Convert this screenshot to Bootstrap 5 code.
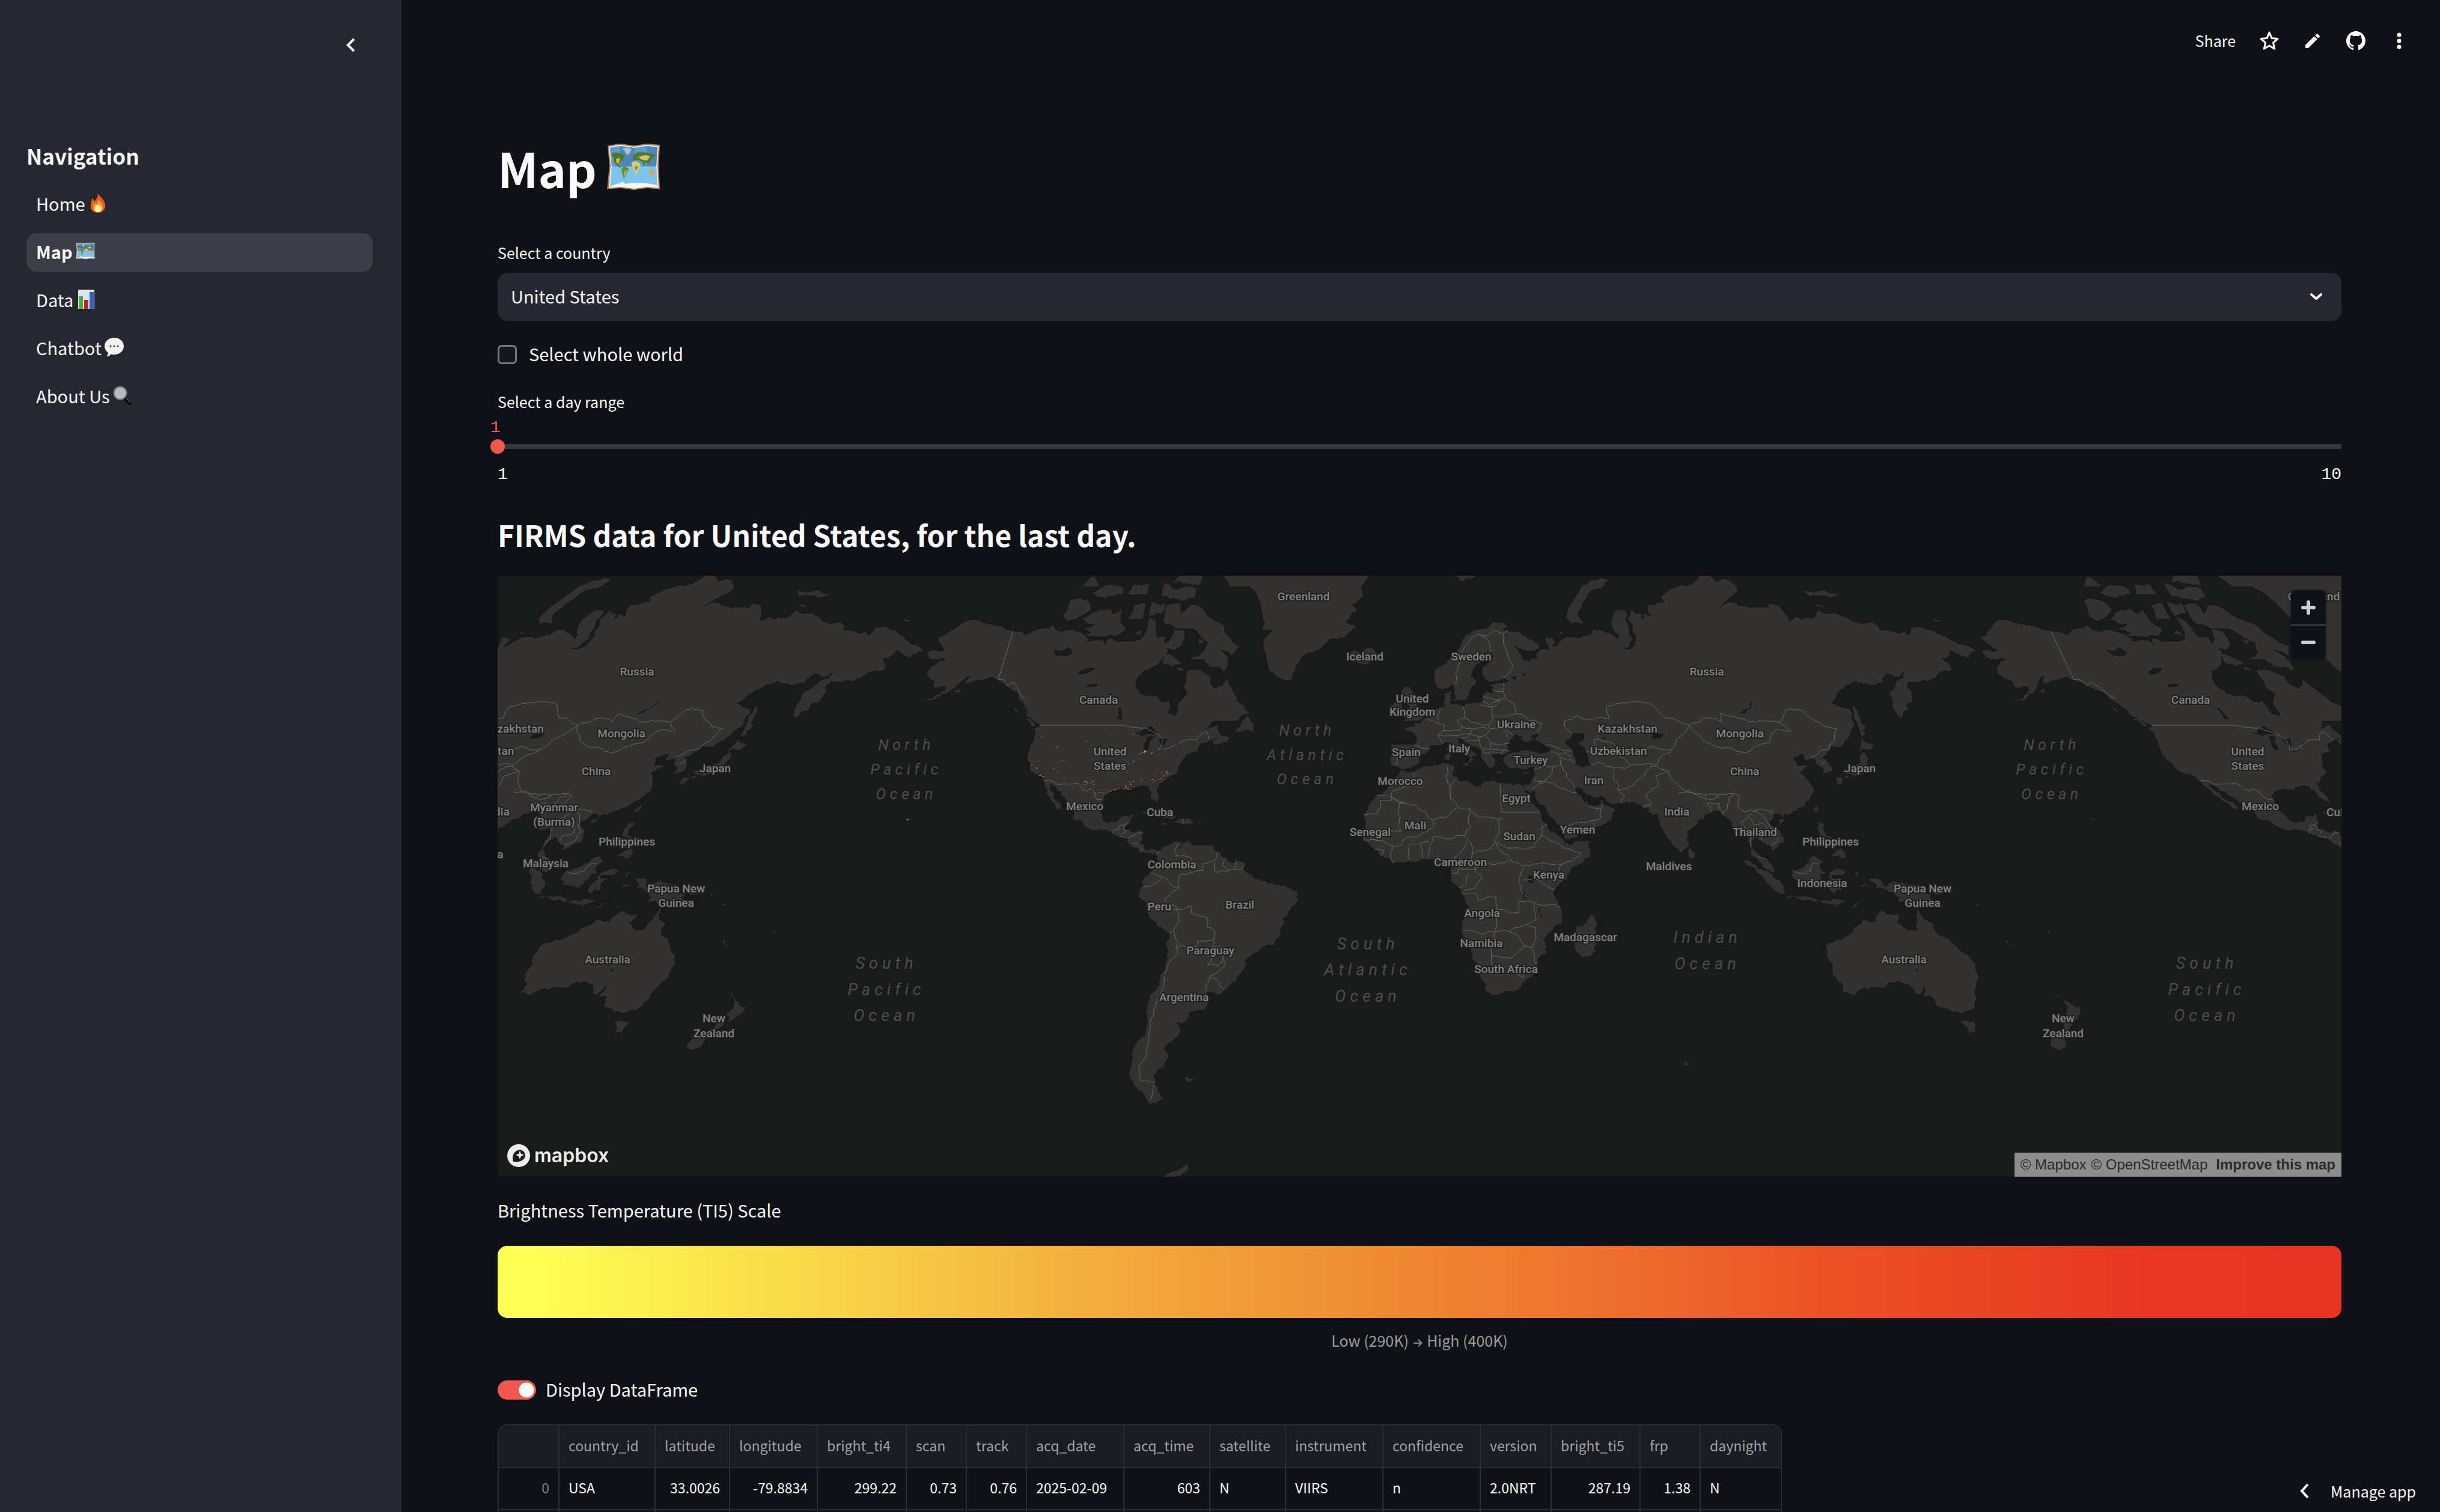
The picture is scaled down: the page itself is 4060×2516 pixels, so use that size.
<!DOCTYPE html>
<html lang="en">
<head>
<meta charset="utf-8">
<meta name="viewport" content="width=device-width, initial-scale=1">
<title>Map</title>
<link href="https://cdn.jsdelivr.net/npm/bootstrap@5.3.0/dist/css/bootstrap.min.css" rel="stylesheet">
<style>
:root{--app-bg:#0f1116;--panel:#262730;--ink:#fafafa;--accent:#f0584f;--muted:#9c9d9f}
body{background:var(--app-bg);color:var(--ink);font-family:"Noto Sans CJK SC","Noto Sans CJK JP",sans-serif;font-size:29px;line-height:48px}
button,input,select{font-family:inherit}
.side{width:668px;background:var(--panel);padding:0 48px 0 44px}
.side-top{height:136px;padding-top:14px}
.icon-btn{background:none;border:0;padding:0;color:inherit;line-height:0;display:block}
.side-title{font-size:35px;line-height:48px;font-weight:700;margin:99px 0 25px}
.side .nav{gap:16px}
.side .nav-link{color:var(--ink);height:64px;padding:0 16px 4px;border-radius:16px;font-size:29px;display:flex;align-items:center;gap:5px}
.side .nav-link.active{background:#3c3d46;font-weight:700}
.pic{width:32px;height:32px;flex:none}
.content{padding:0 164px 0 160px}
.topbar{height:136px;padding-right:32px}
.topbar .tool{width:72px;display:flex;justify-content:center}
.share{background:none;border:0;color:inherit;font-size:25px;line-height:40px;padding:0 0 2px;margin-right:20px}
.page-title{font-size:79px;line-height:106px;font-weight:700;margin:90px 0 68px;gap:17px}
.page-title svg{width:88px;height:80px}
.field-label{font-size:25px;line-height:40px;margin:0;display:block}
.country{height:80px;margin:14px 0 32px;background-color:var(--panel);border:0;border-radius:16px;color:var(--ink);font-size:29px;line-height:48px;padding:0 72px 4px 22px;
background-image:url("data:image/svg+xml,%3Csvg xmlns='http://www.w3.org/2000/svg' viewBox='0 0 24 16'%3E%3Cpath d='M4 4l8 7 8-7' fill='none' stroke='%23fafafa' stroke-width='4' stroke-linecap='round' stroke-linejoin='round'/%3E%3C/svg%3E");background-size:24px 16px;background-position:right 30px center}
.tick{gap:20px;margin-bottom:34px}
.tick label,.toggle label{height:48px;line-height:44px}
.tick input{width:32px;height:32px;margin:0;border:3px solid #77787e;border-radius:8px;background-color:#131720;flex:none}
.mono{font-family:"Liberation Mono",monospace;font-size:28px;line-height:32px}
.slide-value{color:var(--accent);line-height:28px;margin:10px 0 5px -12px}
.slider{appearance:none;display:block;width:calc(100% + 24px);height:24px;margin:0 -12px 19px;background:linear-gradient(#363940,#363940) no-repeat center/calc(100% - 24px) 8px}
.slider::-webkit-slider-runnable-track{height:24px;background:none}
.slider::-webkit-slider-thumb{appearance:none;width:24px;height:24px;border-radius:50%;background:var(--accent)}
.section-title{font-size:48px;line-height:68px;font-weight:700;margin:49px 0 35px}
.world{height:1000px;background:#191b1a;overflow:hidden}
.world>svg{width:100%;height:100%;display:block}
.land{fill:#343231}.water{fill:#191b1a}.edge{fill:none;stroke:#686867;stroke-width:1}
.place{font:500 19px Roboto,sans-serif;fill:#828281;stroke:#1f1f1e;stroke-width:4px;stroke-linejoin:round;paint-order:stroke;text-anchor:middle}
.sea-n,.sea-s{font:italic 400 25px Roboto,sans-serif;letter-spacing:.26em;fill:#4c4e4d;text-anchor:middle}
.sea-s{font-size:27px}
.zoomer{top:24px;right:26px;width:58px;border-radius:8px;overflow:hidden;box-shadow:0 0 0 4px rgba(0,0,0,.1)}
.zoomer button{height:57px;width:58px;background:#0e1117;border:0;padding:0;line-height:0}
.zoomer button+button{border-top:2px solid #3d4044}
.brand{left:15px;bottom:15px;gap:6px;color:#ececec;font:600 32px/40px Inter,sans-serif;text-decoration:none}
.credit{right:0;bottom:0;height:40px;padding:0 10px;background:#8c8d8c;font:24px/40px "Liberation Sans",sans-serif;gap:14px}
.credit a{color:#2a2b2b;text-decoration:none}
.scale-label{margin:31px 0 36px}
.scale-bar{height:120px;border-radius:16px;background:linear-gradient(90deg,#ffff54 0,#ffff54 2%,#f2a93c 34%,#ee742d 58%,#eb5026 73%,#ea3623 90%,#ea3323 100%)}
.scale-note{font-size:25px;line-height:40px;height:40px;color:var(--muted);margin:17px 0 39px}
.scale-note span{font-family:Inter,sans-serif;font-size:20px;line-height:20px}
.toggle{gap:16px;padding:0;margin:0 0 33px}
.toggle .form-check-input{width:64px;height:32px;margin:0;border:0;float:none;flex:none;background-color:var(--accent);background-image:radial-gradient(circle,#fafafa 12px,transparent 13px);background-size:32px 32px;background-position:right center}
.frame-box{border:2px solid #2b2d33;border-radius:16px 16px 0 0;overflow:hidden;width:2137px}
.frame-box table{table-layout:fixed;width:2137px;margin:0;border-collapse:separate;border-spacing:0;font-size:23px;line-height:32px}
.frame-box th,.frame-box td{height:70px;padding:0 15px 4px;vertical-align:middle;border-right:2px solid #2b2d33;border-bottom:2px solid #2b2d33;white-space:nowrap;font-weight:400;color:var(--ink)}
.frame-box thead th{background:#1a1c24;color:#a0a1a4;height:71px}
.frame-box tbody th{color:#808287}
.manage{right:0;bottom:0;height:66px;padding:0 40px 4px 28px;background:var(--app-bg);border:0;color:var(--ink);font-size:25px;line-height:40px;gap:33px}
</style>
</head>
<body>
<div class="d-flex vh-100 overflow-hidden position-relative">
  <aside class="side flex-shrink-0">
    <div class="side-top d-flex align-items-center justify-content-end">
      <button class="icon-btn" type="button" aria-label="Collapse sidebar"><svg width="72" height="40" viewBox="0 0 72 40"><path d="M41 10 31 20 41 30" fill="none" stroke="#fafafa" stroke-width="4"/></svg></button>
    </div>
    <h2 class="side-title">Navigation</h2>
    <nav class="nav flex-column">
      <a class="nav-link" href="#">Home <svg class="pic" viewBox="0 0 32 32"><path d="M16 0c2 5 10 8 12 18 1 8-4 14-12 14S3 27 4 19c0-5 2-7 2-11 2 1 3 2 4 5 4-4 6-8 6-13z" fill="#ee5a24"/><path d="M17 9c1 5 7 7 7 14 0 5-3 8-8 8s-8-3-8-8c0-4 2-6 3-8 1 1 1 2 2 3 2-2 4-5 4-9z" fill="#ff9f1c"/><ellipse cx="16" cy="25" rx="6" ry="6" fill="#fff3a0"/></svg></a>
      <a class="nav-link active" href="#" aria-current="page">Map <svg class="pic" viewBox="0 0 88 80"><use href="#paper-map"/></svg></a>
      <a class="nav-link" href="#">Data <svg class="pic" viewBox="0 0 32 32"><path d="M3 0h27v32H3z" fill="#dfe4ee"/><path d="M4 11h7v21H4z" fill="#4fae3a"/><path d="M13 17h7v15h-7z" fill="#b5271e"/><path d="M22 4h7v28h-7z" fill="#2c62c4"/></svg></a>
      <a class="nav-link" href="#">Chatbot <svg class="pic" viewBox="0 0 32 32"><path d="M16 0c9 0 16 6 16 14s-7 14-16 14c-2 0-4 0-5-1-2 3-5 4-8 4 2-2 3-4 3-6C2 22 0 18 0 14 0 6 7 0 16 0z" fill="#f1f1f1"/><g fill="#444"><circle cx="10" cy="14" r="1.6"/><circle cx="16" cy="14" r="1.6"/><circle cx="22" cy="14" r="1.6"/></g></svg></a>
      <a class="nav-link" href="#">About Us <svg class="pic" viewBox="0 0 32 32"><path d="M19 20l9 9" stroke="#08090b" stroke-width="6" stroke-linecap="round"/><path d="M22 21l6 6" stroke="#55575c" stroke-width="1.500" stroke-linecap="round"/><circle cx="12" cy="12" r="10.500" fill="#b9babc" stroke="#77797d" stroke-width="2"/></svg></a>
    </nav>
  </aside>

  <div class="flex-grow-1 overflow-hidden">
    <header class="topbar d-flex align-items-center justify-content-end" id="topbar">
      <button class="share" type="button">Share</button>
      <div class="tool"><button class="icon-btn" type="button" aria-label="Favourite"><svg width="36" height="36" viewBox="0 0 36 36"><path d="M18 4l4 9.600 10 .9-7.600 6.700 2.300 10L18 26l-8.700 5.200 2.300-10L4 14.500l10-.9z" fill="none" stroke="#fafafa" stroke-width="3" stroke-linejoin="round"/></svg></button></div>
      <div class="tool"><button class="icon-btn" type="button" aria-label="Edit source"><svg width="32" height="32" viewBox="0 0 24 24"><path d="M3 17.250V21h3.750L17.800 9.940l-3.750-3.750zM20.700 7.040a1 1 0 0 0 0-1.410l-2.340-2.340a1 1 0 0 0-1.410 0l-1.830 1.830 3.750 3.750z" fill="#fafafa"/></svg></button></div>
      <div class="tool"><button class="icon-btn" type="button" aria-label="View on GitHub"><svg width="32" height="32" viewBox="0 0 16 16"><path fill="#fafafa" d="M8 0C3.580 0 0 3.580 0 8c0 3.540 2.290 6.530 5.470 7.590.4.070.55-.17.55-.38 0-.19-.01-.82-.01-1.490-2.010.37-2.530-.49-2.690-.94-.09-.23-.48-.94-.82-1.130-.28-.15-.68-.52-.01-.53.63-.01 1.080.58 1.230.82.72 1.210 1.870.87 2.330.66.07-.52.28-.87.51-1.070-1.780-.2-3.640-.89-3.640-3.950 0-.87.31-1.590.82-2.150-.08-.2-.36-1.020.08-2.120 0 0 .67-.21 2.200.82.64-.18 1.320-.27 2-.27s1.360.09 2 .27c1.530-1.040 2.200-.82 2.200-.82.44 1.100.16 1.920.08 2.120.51.56.82 1.270.82 2.150 0 3.070-1.870 3.750-3.650 3.950.29.25.54.73.54 1.480 0 1.070-.01 1.930-.01 2.200 0 .21.15.46.55.38A8.010 8.010 0 0 0 16 8c0-4.420-3.580-8-8-8z"/></svg></button></div>
      <div class="tool"><button class="icon-btn" type="button" aria-label="Menu"><svg width="32" height="32" viewBox="0 0 32 32" fill="#fafafa"><circle cx="16" cy="6" r="3.500"/><circle cx="16" cy="16" r="3.500"/><circle cx="16" cy="26" r="3.500"/></svg></button></div>
    </header>

    <main class="content">
      <h1 class="page-title d-flex align-items-center">Map
        <svg viewBox="0 0 88 80" aria-hidden="true"><g id="paper-map"><path d="M1 3l21-3 23 3 22-3 21 2-2 34 2 40-21-2-22 3-23-3-22 2 4-40z" fill="#a9784c"/><path d="M3 5l19-3 23 3 22-3 19 2-2 32 2 38-19-2-22 3-23-3-19 2 3-38z" fill="#f3efe6"/><path d="M5 7l17-3 23 3 22-3 17 2-2 31 2 35-17-2-22 3-23-3-17 2 3-35z" fill="#7cc3ee"/><path d="M5 7l17-3v34H8zM45 7l22-3v34H45z" fill="#5a9bd0"/><path d="M22 4l23 3v31H22zM67 4l17 2-2 32H67z" fill="#4b87bd"/><path d="M7 70l14-4 5-3 4 4 15-2 22 1 16 3v4l-16-2-22 3-23-3-15 2z" fill="#f4f6f8"/><path d="M25 9l9-3 7 3-3 7-5 3-4-7z" fill="#aebccb"/><path d="M7 18l3-3 8 0 8 3 4 3-3 4-5 6-3 4 5 4-3 1-6-5-3-5-1-6z" fill="#4f7a2a"/><path d="M15 25l7-1-2 8-4 1z" fill="#e4b33c"/><path d="M26 38l6 0 4 4-2 5-3 6-3 6-2-7-2-8z" fill="#5f962f"/><path d="M30 45l3 0-4 10-1-5z" fill="#e0ad35"/><path d="M43 21l4-5 8-2 12 1 14 4-4 4-3 2-2 6-4 3-3-3-4 0-5-2-4-2-8 1z" fill="#4f7a2a"/><path d="M52 22l12-3 8 2-5 7-9-1z" fill="#d9bf62"/><path d="M41 31l6-2 7 3 2 5-3 5-2 8-3 2-2-8-5-6z" fill="#e3c56a"/><path d="M46 38l6 0-3 6-2-1z" fill="#5f962f"/><path d="M59 31l5 1-2 6z" fill="#4f7a2a"/><path d="M69 46l6-3 4 5-2 4-7-1z" fill="#ec9f3a"/></g></svg>
      </h1>

      <label class="field-label" for="country">Select a country</label>
      <select class="form-select country" id="country"><option>United States</option></select>

      <div class="tick d-flex align-items-center">
        <input class="form-check-input" type="checkbox" id="world-all">
        <label for="world-all">Select whole world</label>
      </div>

      <label class="field-label" for="days">Select a day range</label>
      <div class="mono slide-value">1</div>
      <input class="slider" type="range" id="days" min="1" max="10" value="1">
      <div class="mono d-flex justify-content-between"><span>1</span><span>10</span></div>

      <h2 class="section-title">FIRMS data for United States, for the last day.</h2>

      <div class="world position-relative">
        <svg id="world" viewBox="0 0 3068 1000" preserveAspectRatio="xMidYMid slice" role="img" aria-label="World map of detected fires"></svg>
        <a class="brand position-absolute d-flex align-items-center" href="#">
          <svg width="40" height="40" viewBox="0 0 40 40"><circle cx="20" cy="20" r="19" fill="#ececec"/><path d="M11 30c-2-8 0-14 4-17 5-4 11-3 14 1 3 5 2 10-2 13-4 3-10 4-16 3z" fill="#191b1a"/><path d="M22 12l2 5 5 2-5 2-2 5-2-5-5-2 5-2z" fill="#ececec"/></svg>
          <span>mapbox</span></a>
        <div class="zoomer position-absolute d-flex flex-column">
          <button type="button" aria-label="Zoom in"><svg width="24" height="24" viewBox="0 0 24 24"><path d="M12 3v18M3 12h18" stroke="#cfcfcf" stroke-width="6" stroke-linecap="round"/></svg></button>
          <button type="button" aria-label="Zoom out"><svg width="24" height="24" viewBox="0 0 24 24"><path d="M3 12h18" stroke="#cfcfcf" stroke-width="6" stroke-linecap="round"/></svg></button>
        </div>
        <div class="credit position-absolute d-flex"><span class="d-flex gap-2"><a href="#">© Mapbox</a> <a href="#">© OpenStreetMap</a></span><a class="fw-bold" href="#">Improve this map</a></div>
      </div>

      <p class="scale-label">Brightness Temperature (TI5) Scale</p>
      <div class="scale-bar"></div>
      <p class="scale-note text-center">Low (290K) <span>→</span> High (400K)</p>

      <div class="form-check form-switch toggle d-flex align-items-center">
        <input class="form-check-input" type="checkbox" role="switch" id="show-frame" checked>
        <label for="show-frame">Display DataFrame</label>
      </div>

      <div class="frame-box">
        <table>
          <colgroup><col style="width:101px"><col style="width:160px"><col style="width:124px"><col style="width:146px"><col style="width:148px"><col style="width:100px"><col style="width:100px"><col style="width:162px"><col style="width:143px"><col style="width:126px"><col style="width:162px"><col style="width:162px"><col style="width:118px"><col style="width:148px"><col style="width:100px"><col style="width:137px"></colgroup>
          <thead><tr><th></th><th>country_id</th><th>latitude</th><th>longitude</th><th>bright_ti4</th><th>scan</th><th>track</th><th>acq_date</th><th>acq_time</th><th>satellite</th><th>instrument</th><th>confidence</th><th>version</th><th>bright_ti5</th><th>frp</th><th>daynight</th></tr></thead>
          <tbody>
            <tr><th class="text-end">0</th><td>USA</td><td class="text-end">33.0026</td><td class="text-end">-79.8834</td><td class="text-end">299.22</td><td class="text-end">0.73</td><td class="text-end">0.76</td><td>2025-02-09</td><td class="text-end">603</td><td>N</td><td>VIIRS</td><td>n</td><td>2.0NRT</td><td class="text-end">287.19</td><td class="text-end">1.38</td><td>N</td></tr>
            <tr><th></th><td></td><td></td><td></td><td></td><td></td><td></td><td></td><td></td><td></td><td></td><td></td><td></td><td></td><td></td><td></td></tr>
          </tbody>
        </table>
      </div>
    </main>
  </div>

  <button class="manage position-absolute d-flex align-items-center" type="button"><svg width="20" height="28" viewBox="0 0 20 28"><path d="M15 3 5 14l10 11" fill="none" stroke="#fafafa" stroke-width="4"/></svg><span>Manage app</span></button>
</div>

<script>
// Coastlines as "lon,lat" lists
const land = [
// Europe and Asia
"25.8,71.1 28,70.9 31,70.3 29,69.8 33,69.4 37,68.6 41,67.3 41,66.6 39,66.1 35,66.4 32.5,67.1 34.5,65.5 34.8,64.5 37.5,63.9 38,64.7 40,64.6 39.8,65.5 42,66.4 44.2,66.2 44,67.2 43.5,68.5 46,68.3 46.5,67.8 45.5,67 47,66.9 48,67.6 53,68.6 54.5,68.3 59,68.9 60.5,69.8 64.5,69.3 67,68.8 68.5,68.2 69,68.9 67.5,69.6 66.8,70.8 67.2,71.5 68.5,72.4 69.5,72.9 72.5,72.8 72.8,72 71.9,71.3 72.7,70.4 72.6,69.1 73.5,68.3 71.5,66.7 69,66.6 72,66.3 73.9,67.1 74.9,68.9 73.8,69.6 74.3,70.6 73,71.4 74.8,72.8 76,72.2 77.5,72.3 78,71.2 79,72.3 81.5,71.8 80.5,72.7 80.6,73.6 86.9,73.9 86,74.6 88,75.2 95,76.1 99,76.5 104.3,77.7 107,76.5 111,76.8 114,75.9 113.5,75.3 109,74.2 106,73.2 110,73.9 113.5,73.4 118.8,73.2 123.3,73 123.4,73.7 127,73.5 129,72 129.3,71 132,71.8 133.8,71.4 137.8,71.5 139.5,72.3 140.5,72.8 146,72.4 150,71.6 153,70.9 157,71 159.8,70.4 160,69.7 163,69.6 167.8,69.5 169.5,68.8 170.5,69.5 170.8,70.1 175.7,69.9 180,69 183,68 185.5,67.2 188,66.9 190.2,66.1 187.5,65.5 186.8,64.6 184.5,65.2 183,65.7 181,66.2 180.7,65.3 179,64.7 177.5,64.8 179.5,63 179.3,62.3 174.5,61.8 170.5,60 166.3,59.8 163.3,59.8 162,58.3 163.2,57.7 162.8,56.3 162,54.9 160,54.5 160,53.2 158.5,52.9 156.8,51 155.8,55 155.5,56.8 157,57.8 159.5,60 161.9,60.4 163.8,62.5 160.2,60.8 156.7,61.6 154.5,59.6 151.5,59 148.5,59.3 142,59.2 139,57.5 135.2,54.8 138,53.8 141,53.2 141.4,52.2 140.5,50.5 140.4,48.5 138.5,46.7 136,44.5 133.5,42.8 131,42.9 129.8,41.5 127.5,39.8 128.5,38.5 129.4,37 129.3,35.4 126.5,34.5 126.6,36.8 125,37.8 125.3,39.5 121.8,39 121.5,40.8 118,39.2 119,37.3 122.5,37.2 120.5,36.2 119.3,35 121,32.5 121.8,31 122,29.2 120,26.5 118,24.3 114.2,22.3 111,21.5 110.4,20.3 109.8,21.5 108,21.6 105.8,19 107.5,16.5 109.2,13.5 109.2,11.6 107,10.4 105,8.6 104.8,10.2 102.6,12 100.9,13.5 99.9,12.5 99.3,9.5 100.5,7.5 102.3,6.2 103.4,4.5 104.2,1.4 103.4,1.4 101.3,2.9 100.3,5.5 98.3,8 98.7,10.5 98.5,13.5 97.6,16.4 96,16 94.3,16 94.5,18 93.5,20 91.8,22.4 90.5,22.5 88.5,21.6 87,21.3 86.5,20 83.5,17.7 82.2,16.5 80.3,15.6 80,13 79.9,10.3 78.2,8.9 77.5,8 76.4,9.5 75,12.5 73.5,16 72.8,19 72.7,21.3 71,20.8 69.2,22.2 70.3,22.9 68.5,23.5 67,24.9 64.5,25.3 61.5,25.1 57.3,25.7 56.8,27.1 54,26.6 51.5,27.9 50,30.1 48,30 48.8,28.2 50.2,26.5 50.8,24.9 51.3,26.1 51.6,24.6 51.8,24 54,24.2 56.1,26.1 56.5,24.5 58.6,23.6 59.8,22.5 58.5,20.4 57.7,18.9 55.2,17.5 52.2,15.7 49,14.2 45,12.8 43.5,12.7 42.8,15 42.7,16.6 40.8,19.5 39.1,21.3 38.5,23.6 35.8,27 34.9,29.4 34.3,27.8 32.6,29.9 32.4,31.2 34.2,31.3 35,32.8 36,34.8 36,36.8 34,36.3 32.5,36.1 30.6,36.8 28,36.6 27.2,37.5 26.5,39.2 29,41 31.3,41.2 33.5,42 36,41.6 38.5,41 41.5,41.5 41.5,42.5 39,44 37,45 38.2,46.5 39.2,47.2 35,46.2 36.5,45.3 33.6,44.4 32.6,45.4 33.5,46 31,46.6 29.6,45.2 28,43.5 27.8,42.3 29,41.3 26.2,40.6 24,40.8 22.7,40.3 24,38.2 23,36.5 21.7,36.8 21,38.3 19.4,40.6 19.5,41.8 16,43.5 13.6,45.2 12.3,45.3 12.5,44.2 14,42.6 16,41.8 18.4,40.1 17,40.4 16.5,39.7 17,39 15.8,38 16,39.6 14.5,40.7 12.3,41.8 10.3,43.5 8.8,44.4 7,43.5 4.8,43.4 3,43 3.1,41.8 0.5,40.7 -0.2,39.5 0,38.7 -1.5,37.4 -2.2,36.8 -5.4,36.1 -6.4,36.8 -8.9,37 -9.4,38.7 -8.8,41 -9.2,43.1 -5,43.6 -1.6,43.4 -1.1,46 -2.5,47.4 -4.7,48.2 -1.5,48.7 -1.7,49.7 0.2,49.6 1.6,50.8 4,51.8 5,53.3 8.5,53.8 8.1,55.6 8.3,57 10.6,57.7 10.3,56.5 10,54.6 12.5,54.4 14.2,54 18.5,54.7 20,54.9 21,55.5 21.2,57 22.5,57.6 24.2,57.1 24.4,58.4 23.5,59.2 28,59.5 30,59.9 28,60.5 23,59.9 21.3,61 21.5,63 25.3,65 24.5,65.8 22,65.6 21.2,64.4 18,62.7 17.2,61 18.9,60 16.7,58 16.3,56.6 14.3,55.5 13,55.4 11.4,58.9 10.6,59.3 8,58.1 5.7,58.7 5,61.8 9,63.5 12.5,65.8 15,68.2 18.5,69.6",
// Africa
"-5.9,35.8 -2,35.1 3,36.9 9.8,37.3 11,37 10.3,34.2 15,32.3 19,30.3 20.1,32.2 23,32.6 25,31.6 29,30.9 32.3,31.2 32.6,29.9 33.6,27.8 35.5,24 37.2,21 37.4,18.8 39.2,15.9 41.2,14.6 43.2,12.4 43.3,11.5 45,10.5 51.2,11.9 50.8,9.3 48,4.5 44,1.1 41.6,-1.7 39.3,-4.6 38.8,-6.2 39.6,-8 40.6,-10.6 40.6,-15 37,-17.8 34.8,-19.8 35.5,-22.2 35.4,-24 32.8,-25.6 32.6,-28.3 30.9,-30.4 28,-32.8 25.7,-34 20,-34.8 18.4,-34.1 18.2,-32 16.5,-28.6 14.5,-22.8 11.8,-18 12,-15.5 13.8,-11 12.3,-6 9.3,-2 9.3,0.5 9.8,3.5 8.5,4.6 5.9,4.3 4.4,6.3 1,5.9 -2,4.8 -7.7,4.4 -11.4,6.9 -13.3,9 -15,10.9 -16.8,12.4 -17.5,14.7 -16.3,16.5 -16.3,19.5 -17,21 -15,25 -13,27.7 -10,29.5 -9.7,31.4 -6.8,34.1",
// North America
"-168,65.6 -166.5,66.3 -162,66.1 -163.8,67 -166.3,68.4 -163,69.5 -160,70.6 -156.6,71.3 -152,70.9 -145,70.1 -141,69.6 -136,68.9 -134,69.6 -129,70 -127.5,70.5 -125,69.5 -122,69.8 -116,69 -114,68.2 -115,67.8 -109,67.9 -108,67 -107.5,68.2 -102,67.8 -98.5,67.8 -96,68.2 -94.7,71.9 -92.5,71.3 -91.5,69.6 -90.5,68.5 -88,68.7 -87.5,67.3 -85.5,68.8 -85,69.8 -82,69.7 -81.3,68.7 -81.5,67.2 -84,66.3 -86.5,66.5 -86,65.9 -88,64.2 -93,62.2 -94.7,60 -94.7,58.8 -92.5,57 -88,56.5 -82.4,55.2 -82.2,52.9 -79.8,51.3 -78.9,52.5 -79.5,54.6 -76.6,57 -78.5,58.8 -77.8,62.3 -74,62.3 -70,61.1 -69.5,59 -67.7,58.3 -66,58.8 -64.5,60.3 -62,57.8 -60,55 -57.5,54 -55.8,52 -60,50.2 -66.5,50.2 -69.5,48 -65,49.1 -64.5,47 -63,45.9 -61.5,45.8 -61,45.3 -65.5,43.5 -66.2,44.5 -64.8,45.4 -67,44.8 -70,43.7 -70.7,42 -70,41.7 -74,40.6 -75.3,38 -76,36.9 -75.6,35.2 -78,33.8 -81.2,31.5 -81.3,30 -80.1,27 -80.5,25.2 -81.8,26.2 -82.8,28 -84,30.1 -88,30.3 -89.5,29.2 -93.5,29.7 -97.2,27.8 -97.5,25 -97.8,22.5 -96.3,19.2 -94.5,18.2 -92,18.6 -90.5,20.5 -87,21.4 -87.8,18.3 -88.8,15.9 -84,15.8 -83.3,15 -83.7,11.5 -81.5,8.9 -79.5,9.5 -77.4,8.6 -78,7.4 -80.3,8.3 -80.4,7.4 -83,8.3 -85.7,10 -87.5,12.8 -91.5,14 -94.5,16.2 -97,15.8 -101.5,17.6 -105.5,20 -105.3,21.8 -108.5,25.3 -112.3,29.2 -114.8,31.7 -114.7,30.5 -112.8,28 -111,25.5 -109.5,23.1 -110.2,23 -112,25 -114.8,27.8 -116,30.5 -117.3,33 -120.6,34.5 -122.5,37.7 -124.3,40.3 -124.2,43.5 -124.6,48.2 -122.8,48.9 -125,50.1 -127.8,51.4 -130.3,54.6 -133.5,57.5 -137,58.6 -140,59.8 -145,60.5 -148.5,60.1 -151.8,59.3 -150.5,61 -153.5,59.5 -156,57.5 -160,55.7 -164.8,54.7 -160.5,56 -157.7,57.6 -157.2,58.8 -162,58.7 -162,60 -165.5,61.3 -164.8,63 -161,64.2 -161.5,64.7 -166.2,64.5",
// South America
"-77.4,8.6 -75.5,10.6 -72,12 -71.5,10.8 -70,11.8 -68,10.6 -62,10.6 -60.5,8.5 -57,6 -52,4.8 -50,1 -48.5,-0.8 -44.3,-2.5 -41,-2.9 -38.5,-3.8 -35.3,-5.3 -34.9,-8 -37,-11 -39,-13.5 -39.3,-18 -41,-21.8 -44.5,-23.1 -48.5,-26 -48.7,-28.5 -52,-32.5 -54.9,-34.9 -58.3,-34.2 -56.8,-36.3 -57.7,-38.1 -62,-39 -62.3,-40.8 -65,-41 -63.7,-42.5 -65.4,-45 -67.5,-46.3 -65.8,-47.8 -69,-51 -68.3,-52.4 -65.2,-54.7 -69,-55.5 -73.5,-52.8 -75.4,-50 -75.5,-46.8 -72.8,-44 -72.8,-41.6 -73.6,-39 -73.4,-37 -71.5,-33 -71.4,-30 -70.3,-25 -70.2,-19.5 -71.4,-17.7 -76,-14.2 -79,-8.2 -81.2,-5.8 -80.3,-3.4 -80.9,-2.2 -80,0 -78.8,1.5 -77,4 -77.5,6.5 -78,7.4",
// Greenland and the Arctic islands
"-73,78.4 -68,76 -61,76 -58,75 -55.5,72.5 -54,71 -54.5,69.6 -51,69.8 -53.5,68.2 -53.5,66.5 -51.5,64 -50,62 -48,61 -44.8,60 -43,60.2 -42,62.5 -40.5,64.5 -38,65.8 -34,66.5 -31,68.2 -25.5,68.7 -22.3,70.3 -26,71 -24.5,71.7 -22,73 -24,73.6 -20,74.8 -21,76 -19,76.8 -18,80 -60,82 -73,79",
"-66,62 -71,63 -73,64.5 -78,64.5 -73.5,66 -72.5,67.7 -76,69 -79,70 -85,70 -89.5,71 -89.5,73.5 -85,73.8 -84,72.2 -81,73.6 -76,72.8 -71,71 -68,70.3 -67,69 -61.8,66.7 -64,65.2 -68,66.2 -65,64.2 -65,63",
"-116,69.2 -110,68.6 -105,68.7 -102,69.8 -104.5,71 -105,73 -108,72.2 -109,73 -113,72.8 -118,71.5 -113,70.7 -117,70 -113.5,69.3",
"-125,72 -123,71.2 -119.5,71.8 -116,73 -118,74.2 -124,74.3",
"-80,74.6 -92,74.7 -92,76.5 -88,75.6 -80,75.7",
"-87,65.5 -80.5,63.8 -84,63 -87,63.7","-95,72 -90,72.6 -90,73.8 -95,74","-102,71.5 -97,71.5 -97,73.8 -101,73.6",
"-99,69 -96,68.8 -97,69.7","-106,75 -112,74.5 -117,75.2 -112,76.2 -106,75.7","-97,75 -104,75 -103,76.2 -97.5,76.4","-115,76 -123,76 -118,77.2",
"-79,76.2 -84,76.4 -89,76.5 -87,77.2 -89,79 -76,79","-76,67.4 -74,67.8 -76,68.2","-79.5,62 -82.5,62.7 -80,62.6",
"51.5,71.5 53,70.8 57.5,70.7 55.5,72.3 58,74 62,75.6 68.5,76.7 66,77 58,76 54.5,74 52,72.5",
"137,75.5 141,75.2 145,75.5 150,75 143,74.8 139,74.7","140,73.4 143.5,73.3 141,73.7","179,71 182.5,71.2 180,71.5","48.3,69.2 49.5,69 49.2,69.5",
"12,77.6 15,76.6 17,77 22,77.5 24,79 12,79","-24,65.5 -22.5,66.3 -20.5,65.7 -16,66.5 -13.6,65 -18.5,63.4 -22.6,63.9 -22,64.9",
"-5.6,50.1 -3.5,50.3 1.3,51.1 1.6,52.7 -0.2,53.6 -1.6,55.4 -3.3,56.2 -2,57.5 -3.2,58.6 -5,58.6 -6,57 -5,54.8 -3.1,54 -4.5,53.2 -4.2,52.3 -5.2,51.8 -3,51.3","-6.2,52.2 -10,51.6 -9.8,53.9 -8,55.2 -5.6,54.5",
"-59.3,47.6 -53.2,46.7 -53.5,49 -55.8,51.5 -57.5,50.3","-128,50.7 -125,49.7 -123.5,48.4 -125.5,48.8","-133,54 -131.7,53 -131.2,52.2 -132.5,53",
"-154.5,57.5 -152.3,58.3 -153,57.1",
"-84.9,21.9 -82,23.1 -77,21.7 -74.2,20.2 -77.7,19.9 -78,20.8 -82,22.4","-74.4,18.4 -72.7,19.9 -68.4,18.6 -71.5,17.8","-78.3,18.3 -76.3,18 -77.5,17.8","-67.2,18.4 -65.7,18.3 -66.5,18",
// Japan and Sakhalin
"142.6,54.3 143.3,52.5 143.3,49.3 144.5,49 142.8,47.5 143.4,46.7 142,46 142,49 141.8,52","140,41.5 141.5,45.3 145.3,43.5 143.2,42 141,42.5",
"140,40.6 141,41.3 142,39.6 141,38 140.8,35.8 138.5,34.7 135.8,33.5 135,34.6 131,34 132.7,35.5 136,35.8 137,37.3 138.8,37.8","130,33.5 131.8,33.5 131.3,31.4 130.2,31.2","132.2,33.5 134.6,34.2 133.5,33.2",
"120.2,23 121.6,25.2 120.9,22","108.7,19.3 110.9,20 109.5,18.2",
// South-east Asia
"120.3,16 120.7,18.5 122.2,18.4 121.6,16 122,14.2 124,12.8 120.7,13.9","122,6.9 123.5,8.6 125.5,9.7 126.4,7 125.3,5.8 124,7","122,10.5 123.2,11.6 124.4,10.5 125.2,12.4 124.2,11.8 123,9.2","117.3,8.3 119.4,11.2 118.5,9.5",
"109.1,1.5 111.5,2.5 113.2,3.2 115,5 117,7 119.2,5.2 117.8,3.5 119,1 117.5,0.8 116.5,-1.5 116,-3.8 114,-3.3 111,-3 110,-1.3 109,0.3",
"95.3,5.6 97.5,5.2 100.5,2.2 103.5,-0.8 106,-3 105.8,-5.8 104,-5.5 101,-2.5 98.8,1.5 96.5,3.7","105.3,-6.8 108.5,-6.7 111,-6.5 114.5,-7.7 114.3,-8.6 110,-8.1 106.5,-7.3",
"120,1 125,1.5 124,0.4 120.5,0.4 121,-0.8 123.4,-0.9 121.5,-2 122.8,-4.4 121.5,-4.7 120.9,-2.8 120.4,-5.5 119.5,-5.4 119,-3","115,-8.3 118.5,-8.2 122.8,-8.3 121,-8.9 117,-9","123.5,-10.3 127.2,-8.4 125,-9.6","127.5,1 128.5,1.5 128.2,-0.8","128,-3 130.7,-3.2 128.5,-3.5","119,-9.5 120.5,-10.2 119.4,-9.9",
"131,-0.8 134,-0.8 135,-3.3 138,-1.7 141,-2.6 145.8,-5 147.8,-6.3 147,-7 150.7,-10.4 147,-9.5 143.5,-8.5 141,-9.1 138,-8.3 138.5,-6.8 135.5,-4.5 132.9,-4 133,-2.7 131.5,-1.5",
"148.5,-5.7 151,-4.9 152.2,-4.2 151,-5.9 149,-6.2","155,-5.6 156,-6.7 155.3,-6.5","159.5,-8.4 160.8,-9.6 159.8,-9.6","164.2,-20.3 167,-22.3 165.5,-21.6","177.5,-17.7 178.5,-18 177.6,-18.2","79.8,8.5 80.3,9.6 81.8,7.5 81,6.1 80,6.3",
// Australia and New Zealand
"113.8,-22 114,-26.5 115.7,-32 115,-34.2 118,-35 124,-33 129,-31.6 131.2,-31.5 134.2,-32.8 135.6,-34.8 137.8,-32.7 137,-35.2 138.5,-35 140,-37.5 143.5,-38.8 146.3,-39 150,-37.5 151.3,-33.5 153.2,-31 153.5,-28 153,-25.3 150.8,-23.3 149,-20.5 146.3,-19 145.5,-15 143.6,-14.3 142.5,-10.8 141.6,-13.5 140.8,-17.4 139.3,-17.4 135.5,-15 136.9,-12.3 132.6,-11.4 130.8,-12.5 129.7,-15 128,-14.8 126,-14 124,-16.3 122.3,-18 119,-20 116.8,-20.6",
"144.7,-40.8 148.3,-40.9 147.9,-43.2 146,-43.5","172.8,-34.4 175.3,-36.4 178.4,-37.7 176.8,-39.7 175,-41.5 174.9,-39.9 173.8,-39.3 174.8,-38 174.5,-36.6","172.7,-40.6 174.3,-41.7 171.2,-44.2 170.5,-46 168.4,-46.6 166.6,-45.9 170.5,-43",
"49.3,-12 50.4,-15.5 49.5,-17 47.2,-25 45,-25.5 43.4,-22 44.4,-19.8 44.5,-16.3 47.3,-15.2",
"-156,20.2 -154.9,19.5 -155.8,19","-61,-51.4 -57.9,-51.5 -59.5,-52.2","-38,-54 -36,-54.7 -37,-54.4","68.8,-48.8 70.4,-49.2 69.2,-49.6","-70,-66.5 -66,-65.6 -63,-64.7 -60.5,-63.9 -57.2,-63.2 -57,-63.7 -60,-64.5 -62,-66 -64,-67",
"8.2,39 9.6,39.2 9.7,41 8.3,40.8","8.6,42 9.5,43 9.4,41.5","12.5,38 15.5,38.2 15.1,36.7","23.6,35.5 26.2,35.2 24.8,34.9","32.3,35 34.5,35.6 33.5,34.6","11,55.7 12.5,56 12,54.9","53.4,12.6 54.4,12.5 53.8,12.3"
];
// Lakes and inland seas
const lakes = [
"49,46.5 51.5,47 53,46.8 53,45.3 51,44.5 50.3,44.3 52.7,42.5 52.9,41.3 53.6,39.5 53.8,37.2 51.5,36.7 49,37.6 49.3,39.5 48.8,41.8 47.5,43 46.8,44.5","58.5,45.5 60.5,46.3 59.5,44.5","103.8,51.6 106,52.3 108.5,53.7 109.8,55.7 109,54.9 107.5,53.4","30.5,60.6 32.5,61 32,60","34.5,61.3 36,62.5 35.5,61","74,45.2 78.8,46.7 75,46.7",
"-92,46.7 -89,48 -86.5,48.8 -84.5,46.7 -87,46.5","-87.8,42 -86.3,42.2 -86.3,44.5 -85,45.9 -87.5,45.6 -87.9,43.5","-84,46 -80.5,45.4 -81.7,43.3 -82.5,43 -83.3,45","-83.3,41.7 -79,42.8 -82,41.6","-79.7,43.3 -76.3,43.5 -77,44.1",
"-98.5,50.5 -96.5,50.7 -97.5,53.5 -99,53.8","-124,65.2 -118.5,65.7 -120,66.8 -122,66.2 -125,66.4","-116.5,61 -109,62.7 -112,62.8 -114,62.3","-102.5,56.6 -101.8,58","-111,58.6 -106.5,59.3 -110,59.3",
"31.8,0.3 34,0.2 33.5,-2.5 31.9,-2.3","29.3,-3.5 31,-8.5 30.6,-8.6","34,-9.8 34.8,-14 34.4,-12","-71.8,9.5 -71.2,10.7 -71.4,9.3","136.8,-28.3 137.8,-28.6 137.3,-29.3","13.3,58.5 14,59.2 13.6,58.5"
];
// Country borders
const edges = [
"-141,69.6 -141,60.3 -139,60.2 -137.5,58.9 -135.5,59.7 -133.8,58.5 -131.8,56.6 -130,56","-123,49 -95.2,49 -94.6,48.7 -90,48.1 -88.4,48.3 -84.8,46.8 -83.5,46.1 -82.4,45.3 -82.4,43 -83.1,42 -79,42.8 -79,43.3 -76.5,44.1 -74.8,45 -71.5,45 -70,46.8 -68.5,47.3 -67.8,45.7 -67,44.9",
"-117.1,32.5 -114.8,32.5 -111,31.3 -108.2,31.4 -106.5,31.8 -104.5,29.6 -103,29 -102,29.8 -100.5,28.5 -99.2,26.4 -97.2,25.9","-92.2,14.5 -91.8,16 -90.5,16.1 -91,17.3 -89.2,17.8 -88.3,18.5","-89.2,17.8 -89.2,15.9 -88.5,15.8","-89.4,14.4 -88.2,15.6","-90.1,13.8 -88,13.2","-87.4,13 -83.2,15","-85.6,11.1 -83.7,10.9","-82.9,8.1 -82.6,9.5","-77.3,8.6 -77.8,7.2","-71.7,19.7 -71.7,18",
"-71.3,11.8 -73,9 -72,7 -67.5,6.2 -67,1.2 -70,0.6 -69.9,-4.2 -73.5,-1 -75.3,-0.1 -78.8,1.4","-75.3,-0.1 -78.5,-3.5 -80.3,-3.4","-67,1.2 -63.5,2 -64,4.2 -60.7,5.2 -60,8.3","-60.7,5.2 -59.5,1.3 -56,2 -52.5,2.2 -51.6,4.2","-57.2,5.9 -58,3.5 -56,2","-54,5.8 -54.5,2.3","-69.9,-4.2 -73.5,-7.5 -72.8,-9.5 -70.5,-9.5 -69.5,-11 -68.7,-12.5 -69,-16 -69.5,-17.5 -70.4,-18.3",
"-70.5,-11 -65.3,-9.8 -65.3,-12 -60.5,-13.7 -60,-16.3 -58.2,-17.3 -57.8,-20 -62.3,-20.5 -62.6,-22.2 -66.2,-21.8 -68,-22.9 -68.7,-19.5 -69.5,-17.5","-68,-22.9 -67.3,-24 -68.5,-25.5 -70,-30 -70,-33.5 -71.2,-37 -71.8,-42 -71.7,-46 -72.3,-48.5 -73.4,-49.5 -72.3,-51.9 -69.9,-52.2 -68.4,-52.4","-68.6,-52.7 -68.6,-54.9","-62.6,-22.2 -57.7,-25.3 -58.6,-27.3 -55.7,-27.4 -54.6,-25.6 -54.3,-24.1 -55.8,-22.3 -57.8,-22.1 -57.9,-20","-53.7,-27.2 -57.6,-30.2 -58.2,-34","-54.6,-25.6 -53.7,-27.2","-57.6,-30.2 -55.6,-30.9 -53.3,-33.7",
"-9,42 -6.3,41.7 -7,39 -7.4,37.2","-1.7,43.4 3.1,42.4","2.5,51 6,49.5 8.2,49 7.6,47.6 6,46.3 7.6,43.8","6,49.5 6,51.8 7,53.3","7.6,47.6 10.4,47.5 13,47.6 13.7,48.8 12.2,50.3 14.8,51 14.2,53.9","6,46.3 10,46.4 13.7,46.5 16.2,46.8 17,48 13.7,48.8","14.8,51 18.8,49.5 22.6,49.1 24,50.8 23.5,53.9 19.8,54.4","17,48 22.3,48.2 22.6,49.1","16.2,46.8 18.8,45.9 21,46.2 22.8,48","23.5,51.5 27.5,51.5 31.8,52.1 34,51.7 35.4,50.4 39.8,49.6 38.2,47.1","31.8,52.1 31,54.7 28.2,56.1 27.7,57.5 28,59.4","21,55.3 22.8,54.4 26.5,55.5 28.2,56.1","24.4,57.9 27.5,57.5","21,56.3 26.5,55.7","23.5,53.9 26,54.8 26.5,55.5","28,60.6 31.5,63 29.5,66.5 28.8,69.2 31,69.8","24.2,65.8 23.7,67.9 20.5,69.1 18.2,68.5 14.5,66 14,64 12.2,61.5 12.5,60 11.3,59","20.5,69.1 23.5,68.8 26,69.8 28.8,69.2",
"22.8,48 27,48.2 28.2,46 28.2,45.4","27,48.2 30,46.4","22.7,44.2 28.6,43.8","21,46.2 22.7,44.2 22.4,42.3 26.5,42 28,42","18.8,45.9 19.3,44.9 19.5,43.3 20.3,42.3 22.4,42.3","15,45 16.5,44.8 19.3,44.9","20,42 21,40.9 26.3,41","13.7,45.5 15.5,45.8 16.5,46.5","26.5,42 26.3,41",
"36,36 38.5,36.9 42.4,37.2 44.8,37.2 44.5,39.8 43.5,41 41.6,41.5","44.5,39.8 48,38.9 48.8,38.4","40,43.4 44,42.6 48.5,41.8","43.5,41 46.5,41.2 48,38.9","42.4,37.2 41,34.4 39,32.2 36,32.5 35.6,33.5","39,32.2 37,31.5 35,29.5","39,32.2 42,31.1 46.5,29.1 48.4,28.5","44.8,37.2 46,35 47.8,31 48.5,30","43,16.6 45,17.4 49,18.6 52,19 55,20 55.5,22.7 51.6,24.2","52,19 53.1,16.7","55.5,22.7 56,24.3",
"54,37.4 57,38.2 61.2,36.6 60.6,34 61.8,31 61.6,29.4 63.2,27.2 61.7,25.2","61.2,36.6 64.5,36.4 66.5,37.4 71.5,37.9 74.5,37.3 71.5,36 69.5,33.5 66.5,31 62,29.4 61,29.8","53,41.5 56,41.3 58.5,42.7 61.9,41.1 66.5,37.4","56,45 56,41.3","56,45 61,44.3 66.5,41.9 68,41 71,42.3 74,43.1 80.2,42.1 82.5,45.3 85.5,47 87.3,49.1","49,46.5 47,48.3 47,50.2 51,51.6 55.5,50.7 61.5,50.8 61.2,53.8 70,55.3 76.8,54.2 80,51 87.3,49.1 92,50.8 98,50 98.3,52.2 102.3,51.3 107,49.8 114.5,50.2 116.7,49.8 119.8,47.5 115.5,47.9 111.8,44.2 105,41.6 97,42.7 90.8,45.2 87.3,49.1","116.7,49.8 120,53.2 125.5,53 130.8,48.8 134.8,48.3 133,45 131,43.5 130.6,42.4 128,42 124.3,40","126.8,37.8 128.4,38.6",
"74.5,37.3 80.2,42.1","74.5,37.3 78,35.3 79,32.5 81,30.2 88,27.9 92,27.8 97,28.3 98.7,27.5 97.7,24 99.5,22.1 102,22.4 105,23 108,21.6","68.2,23.7 71,24.4 70,28 74.5,31 74,34 77.8,35.5","80.1,28.7 88,26.4 88.1,27.9","88.1,26.4 92,26.9 92,27.8","89,22 88.2,25.2 92.2,25 91.5,23.3 92.5,21","92.3,21.3 94.5,24.7 97,28.3","98.7,10 99.4,13 98.3,16.3 97.5,18.5 100,20.3 101.2,21.5","100.5,20 101.2,17.7 104,18.3 105.6,15 105,14.2 102.5,13.7 102.8,11.8","102.1,22.4 104.8,20 105.5,18.2 107.5,15.3 107.4,12.2 105,10.5","100.2,6.5 102,6","109.6,2 111.5,1 114.8,1.7 115.8,4.2 117.6,4.2","124.9,-9 125.2,-9.4",
"-2.2,35.1 -1.2,32.3 -5.5,30 -8.7,28.7 -8.7,27.3 4.2,19.2 12,23.5 9.5,26.5 9.5,30.2 8.3,33.5 8.7,37","9.5,30.2 11.5,33.1","25,31.6 25,22 36.8,22","25,20 24,19.5 15,23.4 12,23.5","-13,27.7 -8.7,27.3 -8.7,26 -12,26 -12,23.5 -13,21.4 -17,21","-8.7,27.3 -4.8,25 -6.5,25 -5.5,15.5 -11.5,15.5 -12.2,14.8 -16.5,16.1","4.2,19.2 4.2,17 1,15 -4,13.3 -5.5,10.4 -8,10.2 -8.5,7.5 -7.5,4.4","15,23.4 15.5,17 13.6,13.7 4,13.5 3.7,11.7 2.7,6.4","24,19.5 24,15.5 22.5,12.7 23,11 27.5,9.6 34,10 36,12.7 37,17 38.6,18","24,12 22,10.8 15.5,7.5 14.5,12.8","8.6,4.8 11,6.8 13.5,10 14.2,12.5","15.5,7.5 14.6,5 16.2,2.2 18.5,4.3 22.5,4.1 27.4,5.1 30.8,3.5 34,4.2 36,4.4 41.9,3.9 45,5 48,8 42.8,9.5 41.8,11 36.5,14.3","27.4,5.1 24,8.7 23,11","30.8,3.5 29.6,0.8 29.3,-4.5 30.7,-8.3 28.5,-8.5 28.5,-12 24,-11 22,-11 22,-7 17,-8 16.5,-5.9 12.3,-5.9","34,1 34,-1 29.8,-1.3","34,-1 39.2,-4.6","41,-1.8 41,2.8 41.9,3.9","30.7,-8.3 34,-9.5 40.4,-10.6","33,-9.4 33.2,-14 30.2,-15.6 33,-16.5 32.8,-19.5 31.3,-22.4 29.3,-22.1 25.3,-17.8","11.8,-17.3 14,-17.4 21.5,-17.9 25.3,-17.8 28,-16.5 30.2,-15.6","22,-11 22,-16 21.5,-17.9","21,-18.3 21,-22 20,-22 20,-28.4 16.6,-28.6","20,-25 23,-25.3 25.7,-25.5 29.3,-22.1","31.3,-22.4 32,-26.8 32.8,-26.8","27,-29.7 29,-28.7 28.6,-30.6 27,-29.7","11.3,2.3 13.2,2.2 16.2,2.2 18.2,0 16,-4 12.8,-4.8","9.8,1 11.3,1 11.3,2.3","14.5,1 13.8,-2.5 11.5,-3.8","2.7,11.7 0,11 -3,11 -2.8,5.1","1.2,6.1 0.5,11","-8,10.2 -11,12.2 -15,12.5","-11,12.2 -13.7,12.7 -16.7,12.4","-11.3,7 -10.5,9 -13.2,9.1"
];

// Web-Mercator plane seen from a camera pitched by 30 degrees
const W = 2048, D = 1500, SIN = .5, COS = Math.cos(Math.PI / 6);
const project = (lon, lat) => {
  const v = Math.asinh(Math.tan(lat * Math.PI / 180)) / (2 * Math.PI) * W;
  const s = D / (D + v * SIN);
  return [1534 + lon / 360 * W * s, 500 - v * COS * s];
};
let seed = 7;
const rnd = () => (seed = (seed * 16807) % 2147483647) / 2147483647 - .5;
const parse = t => t.split(' ').map(p => p.split(',').map(Number));
// Midpoint displacement gives long coast segments a natural, broken edge
const rough = (pts, amp, closed) => {
  for (let k = 0; k < 4; k++) {
    const out = [];
    pts.forEach((a, i) => {
      out.push(a);
      if (i === pts.length - 1 && !closed) return;
      const b = pts[(i + 1) % pts.length], dx = b[0] - a[0], dy = b[1] - a[1];
      if (Math.hypot(dx, dy) > .6 && dx && dy) {
        const r = rnd() * amp, q = Math.cos(a[1] * Math.PI / 180);
        out.push([(a[0] + b[0]) / 2 - dy * r, (a[1] + b[1]) / 2 + dx * r * q]);
      }
    });
    pts = out;
  }
  return pts;
};
const path = (lists, cls, amp, closed) => {
  let d = '';
  lists.forEach(t => {
    const pts = rough(parse(t), amp, closed);
    [-360, 0, 360].forEach(o => {
      d += 'M' + pts.map(p => project(p[0] + o, p[1]).map(n => n.toFixed(1)).join(' ')).join('L') + (closed ? 'Z' : '');
    });
  });
  return `<path class="${cls}" d="${d}"/>`;
};
const places = [["Russia",232,160],["Kazakhstan",27,255],["Mongolia",206,263],["Uzbekistan",-20,292],["China",164,326],["Japan",362,321],["India",-1,393],["Myanmar",94,386],["(Burma)",94,410],["Philippines",215,443],["Sri Lanka",-30,464],["Malaysia",80,479],["Papua New",297,521],["Guinea",297,545],["Australia",183,639],["New",360,737],["Zealand",360,762],["Canada",1000,207],["United",1019,293],["States",1019,317],["Mexico",977,384],["Greenland",1341,35],["Iceland",1443,135],["Sweden",1620,135],["United",1522,205],["Kingdom",1522,227],["Ukraine",1695,248],["Kazakhstan",1880,255],["Uzbekistan",1865,292],["Italy",1600,288],["Spain",1512,294],["Turkey",1719,307],["Iran",1824,341],["Morocco",1502,342],["Egypt",1695,371],["India",1962,393],["Thailand",2092,427],["Yemen",1797,423],["Mali",1527,416],["Senegal",1452,427],["Sudan",1700,434],["Cameroon",1602,477],["Kenya",1749,498],["Maldives",1949,484],["Colombia",1122,481],["Cuba",1102,394],["Peru",1101,551],["Brazil",1235,548],["Angola",1638,562],["Namibia",1637,612],["Madagascar",1810,602],["South Africa",1678,655],["Paraguay",1186,624],["Argentina",1142,702],["Russia",2012,160],["Mongolia",2067,263],["China",2075,326],["Japan",2267,321],["Philippines",2218,443],["Indonesia",2204,512],["Papua New",2371,521],["Guinea",2371,545],["Australia",2340,639],["New",2605,737],["Zealand",2605,762],["Canada",2817,207],["United",2912,293],["States",2912,317],["Mexico",2933,384],["Cuba",3065,394],["Greenland",3022,35]];
const seasN = [["North",677,281],["Pacific",677,322],["Ocean",677,363],["North",1344,257],["Atlantic",1344,298],["Ocean",1344,338],["North",2583,281],["Pacific",2583,322],["Ocean",2583,363]];
const seasS = [["South",644,645],["Pacific",644,689],["Ocean",644,732],["South",1445,613],["Atlantic",1445,656],["Ocean",1445,700],["Indian",2010,602],["Ocean",2010,646],["South",2841,645],["Pacific",2841,689],["Ocean",2841,732]];
const text = (cls, rows, dy, dx) => rows.map(r => `<text class="${cls}" x="${r[1] + dx}" y="${r[2] + dy}">${r[0]}</text>`).join('');

// Fire detections as x,y on the map
const fires = "905,268 1021,263 1058,262 980,275 931,284 940,307 899,308 889,313 889,315 896,319 897,320 898,320 925,320 932,325 943,336 903,331 904,332 906,334 908,334 901,332 987,336 993,323 998,325 1015,331 1027,333 1016,320 1033,318 1036,322 1050,313 1047,324 1058,309 1058,311 1067,304 1069,295 1073,294 1076,294 1076,296 1087,295 1089,294 977,341 979,342 978,343 980,343 982,344 981,346 977,347 983,346 986,346 989,344 990,342 991,341 992,347 987,340 995,361 1001,360 1006,360 1009,363 1014,361 1019,358 1021,358 1026,355 1029,355 1033,353 1045,350 1046,349 1045,352 1047,354 1049,353 1050,355 1042,355 1059,351 1051,343 1053,343 1053,346 1054,347 1056,341 1058,342 1071,337 1072,341 1086,341 1088,338 1090,339 1092,338 1094,341 1091,343 1094,331 1101,339 1104,337 1107,338 1109,333 1108,332 1105,328 1112,326 1113,327 1114,325 1115,328 1117,329 1113,330".split(' ').map(p => p.split(',').map(Number));
const hot = fires.map(p => `<rect x="${p[0] - 1}" y="${p[1]}" width="2" height="1" fill="${p[1] < 300 ? '#c98a35' : '#c8622c'}"/>`).join('')
  + '<rect x="1076" y="291" width="3" height="2" fill="#f0922e"/><rect x="1114" y="322" width="3" height="2" fill="#1414d0"/><rect x="681" y="405" width="3" height="1" fill="#c96a35"/>';

document.getElementById('world').innerHTML =
  path(land, 'land', .44, true) + path(lakes, 'water', .4, true) + path(edges, 'edge', .3, false) +
  hot + text('place', places, 6, 0) + text('sea-n', seasN, 9, 3) + text('sea-s', seasS, 9, 3);
</script>
<script src="https://cdn.jsdelivr.net/npm/bootstrap@5.3.0/dist/js/bootstrap.bundle.min.js"></script>
</body>
</html>
